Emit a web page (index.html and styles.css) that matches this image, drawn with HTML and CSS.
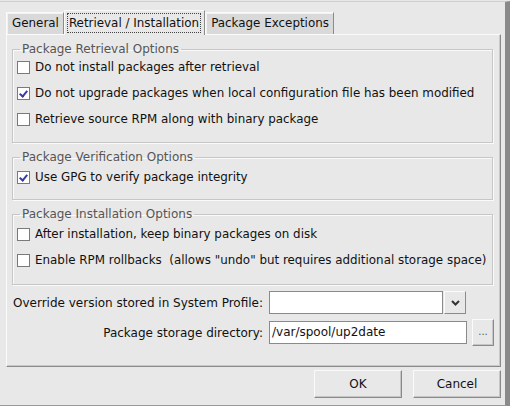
FILE: index.html
```html
<!DOCTYPE html>
<html lang="en">
<head>
    <meta charset="UTF-8">
    <title>Preferences</title>
    <link rel="stylesheet" href="styles.css">
</head>
<body>

<div class="dialog">
    <!-- Tabs -->
    <div class="tabs">
        <div class="tab">General</div>
        <div class="tab active"><span class="focus">Retrieval / Installation</span></div>
        <div class="tab">Package Exceptions</div>
    </div>

    <!-- Notebook page -->
    <div class="panel">
        <fieldset class="group group-retrieval">
            <legend>Package Retrieval Options</legend>
            <label class="check"><span class="box"></span>Do not install packages after retrieval</label>
            <label class="check"><span class="box checked"></span>Do not upgrade packages when local configuration file has been modified</label>
            <label class="check"><span class="box"></span>Retrieve source RPM along with binary package</label>
        </fieldset>

        <fieldset class="group group-verify">
            <legend>Package Verification Options</legend>
            <label class="check"><span class="box checked"></span>Use GPG to verify package integrity</label>
        </fieldset>

        <fieldset class="group group-install">
            <legend>Package Installation Options</legend>
            <label class="check"><span class="box"></span>After installation, keep binary packages on disk</label>
            <label class="check"><span class="box"></span>Enable RPM rollbacks&nbsp; (allows "undo" but requires additional storage space)</label>
        </fieldset>

        <div class="form-row">
            <div class="form-label">Override version stored in System Profile:</div>
            <div class="combo">
                <div class="combo-entry"></div>
                <div class="combo-btn">
                    <svg width="9" height="6" viewBox="0 0 9 6"><path d="M1 1 L4.5 4.5 L8 1" fill="none" stroke="#333" stroke-width="2"/></svg>
                </div>
            </div>
        </div>

        <div class="form-row form-row-dir">
            <div class="form-label">Package storage directory:</div>
            <div class="entry">/var/spool/up2date</div>
            <div class="browse-btn">...</div>
        </div>
    </div>

    <!-- Buttons -->
    <div class="button-row">
        <button class="btn">OK</button>
        <button class="btn">Cancel</button>
    </div>
</div>

</body>
</html>
```

FILE: styles.css
```css
/* Global */
* {
    margin: 0;
    padding: 0;
    box-sizing: border-box;
}

body {
    width: 510px;
    height: 406px;
    background-color: #e8e8e8;
    font-family: 'DejaVu Sans', sans-serif;
    font-size: 12px;
    color: #111;
    overflow: hidden;
}

.dialog {
    width: 510px;
    height: 406px;
    padding: 8px 4px 0 6px;
    border-top: 1px solid #cfcfcf;
    border-right: 5px solid #8a8a8a;
    border-bottom: 2px solid #999;
    margin-top: 1px;
}

/* Tabs */
.tabs {
    display: flex;
    height: 24px;
    align-items: flex-end;
}

.tab {
    height: 22px;
    padding: 0 4px 0 5px;
    line-height: 21px;
    font-size: 11.9px;
    background-color: #d9d9d9;
    border: 1px solid #8c8c8c;
    border-top-color: #fafafa;
    border-left-color: #fafafa;
    border-bottom: none;
    box-shadow: inset 1px 1px 0 #f2f2f2;
}

.tab.active {
    background-color: #e8e8e8;
    padding: 0 3px 0 2px;
    position: relative;
    z-index: 1;
    margin-bottom: -1px;
    height: 25px;
    box-shadow: none;
}

.tab .focus {
    display: inline-block;
    margin-top: 2px;
    line-height: 18px;
    padding: 0 1px;
    border: 1px dotted #444;
}

/* Notebook panel */
.panel {
    height: 333px;
    border: 1px solid #8a8a8a;
    border-top-color: #fafafa;
    border-left-color: #fafafa;
    box-shadow: inset -1px -1px 0 #c9c9c9;
    padding: 7px 5px 0 5px;
}

/* Option groups */
.group {
    border: 1px solid #c6c6c6;
    box-shadow: 1px 1px 0 #fafafa, inset 1px 1px 0 #fafafa;
    padding: 0 0 0 4px;
    margin: 0 2px 7px 0;
}

.group legend {
    padding: 0 2px;
    margin-left: 3px;
    color: #555;
    font-size: 12px;
    line-height: 15px;
}

.group-retrieval {
    height: 101px;
}

.group-verify {
    height: 50px;
}

.group-install {
    height: 78px;
}

.check {
    display: flex;
    align-items: center;
    height: 26px;
    margin-top: -3px;
    font-size: 11.9px;
    white-space: nowrap;
}

.group-verify .check,
.group-install .check:first-of-type {
    margin-top: -1px;
}

.check + .check {
    margin-top: 0;
}

.box {
    width: 13px;
    height: 13px;
    margin-right: 5px;
    background-color: #fff;
    border: 1px solid #7a7a7a;
    flex-shrink: 0;
    position: relative;
}

.box.checked::after {
    content: '';
    position: absolute;
    left: 3px;
    top: 1px;
    width: 3px;
    height: 6px;
    border-right: 2px solid #3a3aa8;
    border-bottom: 2px solid #3a3aa8;
    transform: rotate(40deg);
}

/* Form rows */
.form-row {
    display: flex;
    align-items: center;
    margin-top: -3px;
    height: 27px;
}

.form-row-dir {
    margin-top: 3px;
}

.form-label {
    width: 257px;
    flex-shrink: 0;
    text-align: right;
    padding-right: 6px;
    font-size: 12px;
}

.combo {
    display: flex;
    height: 23px;
}

.combo-entry {
    width: 174px;
    height: 23px;
    background-color: #fff;
    border: 1px solid #8a8a8a;
}

.combo-btn {
    width: 22px;
    height: 23px;
    margin-left: 1px;
    border: 1px solid #8a8a8a;
    border-top-color: #fafafa;
    border-left-color: #fafafa;
    background-color: #e8e8e8;
    display: flex;
    align-items: center;
    justify-content: center;
}

.entry {
    width: 198px;
    height: 23px;
    line-height: 21px;
    padding-left: 2px;
    background-color: #fff;
    border: 1px solid #8a8a8a;
    font-size: 12px;
    flex-shrink: 0;
}

.browse-btn {
    width: 22px;
    height: 27px;
    margin-left: 5px;
    flex-shrink: 0;
    border: 1px solid #8a8a8a;
    border-top-color: #fafafa;
    border-left-color: #fafafa;
    box-shadow: inset -1px -1px 0 #c6c6c6;
    text-align: center;
    line-height: 24px;
    font-size: 10px;
    color: #555;
}

/* Dialog buttons */
.button-row {
    display: flex;
    justify-content: flex-end;
    gap: 11px;
    padding-top: 3px;
}

.btn {
    width: 88px;
    height: 28px;
    font-family: 'DejaVu Sans', sans-serif;
    font-size: 12px;
    color: #111;
    background-color: #e8e8e8;
    border: 1px solid #8a8a8a;
    border-top-color: #fafafa;
    border-left-color: #fafafa;
    box-shadow: inset -1px -1px 0 #c6c6c6;
}
```
